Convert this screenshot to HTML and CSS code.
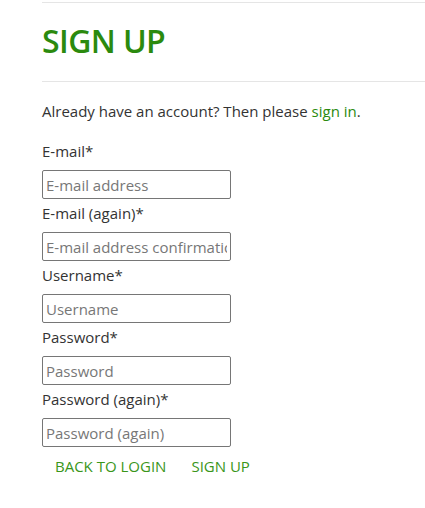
FILE: index.html
```html
<!DOCTYPE html>
<html>
<head>
<meta charset="utf-8">
<link rel="stylesheet" href="styles.css">
</head>
<body>
<div class="page">
  <hr class="rule top">
  <h1 class="title">SIGN UP</h1>
  <hr class="rule">
  <p class="intro">Already have an account? Then please <a href="#" class="link">sign in</a>.</p>
  <form class="form">
    <label class="label">E-mail*</label>
    <input class="field" type="text" placeholder="E-mail address">
    <label class="label">E-mail (again)*</label>
    <input class="field" type="text" placeholder="E-mail address confirmation">
    <label class="label">Username*</label>
    <input class="field" type="text" placeholder="Username">
    <label class="label">Password*</label>
    <input class="field" type="password" placeholder="Password">
    <label class="label">Password (again)*</label>
    <input class="field" type="password" placeholder="Password (again)">
    <div class="actions">
      <a href="#" class="btn">BACK TO LOGIN</a>
      <a href="#" class="btn">SIGN UP</a>
    </div>
  </form>
</div>
</body>
</html>
```
FILE: styles.css
```css
html, body {
  margin: 0;
  padding: 0;
  background: #fff;
}
body {
  font-family: "Open Sans", "Noto Sans", sans-serif;
  color: #333;
  font-size: 15px;
}
.page {
  padding-left: 42px;
  padding-top: 2px;
}
.rule {
  border: 0;
  border-top: 1px solid #e5e5e5;
  margin: 0;
}
.title {
  margin: 0;
  padding: 18px 0 20px;
  font-size: 32px;
  line-height: 40px;
  font-weight: 600;
  color: #2b8a0e;
  letter-spacing: -0.6px;
}
.intro {
  margin: 19px 0 0;
  line-height: 20px;
}
.link {
  color: #2b8a0e;
  text-decoration: none;
}
.form {
  display: flex;
  flex-direction: column;
  align-items: flex-start;
  margin-top: 20px;
}
.label {
  line-height: 20px;
  margin-bottom: 9px;
}
.field {
  box-sizing: border-box;
  width: 189px;
  height: 29px;
  border: 1px solid #767676;
  border-radius: 2px;
  padding: 0 3px;
  font-family: inherit;
  font-size: 15px;
  color: #333;
  margin: 0 0 4px;
}
.field::placeholder {
  color: #777;
}
.actions {
  display: flex;
  gap: 25px;
  padding-left: 13px;
  margin-top: 5px;
}
.btn {
  color: #3a961a;
  text-decoration: none;
  font-size: 15px;
  line-height: 20px;
}
```
